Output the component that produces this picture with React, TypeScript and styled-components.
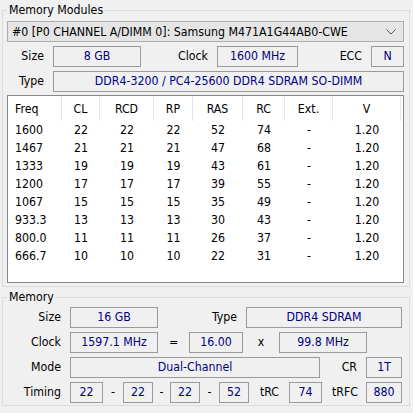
import React from 'react'
import styled, { createGlobalStyle } from 'styled-components'

const GlobalStyle = createGlobalStyle`
  html, body {
    margin: 0;
    padding: 0;
    background: #f0f0f0;
    width: 413px;
    height: 413px;
    overflow: hidden;
  }
  body {
    font-family: "DejaVu Sans Condensed", "DejaVu Sans", sans-serif;
    font-size: 12.25px;
    color: #000;
  }
`

const Page = styled.div`
  width: 408px;
  padding-left: 2px;
`
const Group = styled.div<{ $top: number; $pad: string }>`
  position: relative;
  margin-top: ${(p) => p.$top}px;
  border: 1px solid #dcdcdc;
  padding: ${(p) => p.$pad};
  box-sizing: border-box;
`
const GroupTitle = styled.span`
  position: absolute;
  top: -8px;
  left: 4px;
  padding: 0 2px;
  line-height: 14px;
  background: #f0f0f0;
`
const Stack = styled.div`
  display: flex;
  flex-direction: column;
  gap: 4px;
`
const Row = styled.div`
  display: flex;
  align-items: stretch;
  height: 21px;
`
const Dropdown = styled.div`
  display: flex;
  align-items: center;
  justify-content: space-between;
  height: 21px;
  box-sizing: border-box;
  background: #e5e5e5;
  border: 1px solid #adadad;
  padding: 0 7px 0 4px;
  white-space: nowrap;
`
const Label = styled.div<{ $w: number; $pr?: number }>`
  width: ${(p) => p.$w}px;
  flex: none;
  box-sizing: border-box;
  text-align: right;
  padding-right: ${(p) => p.$pr ?? 9}px;
  padding-top: 3px;
  white-space: nowrap;
`
const Sym = styled.div<{ $w: number }>`
  width: ${(p) => p.$w}px;
  flex: none;
  text-align: center;
  padding-top: 3px;
`
const Field = styled.div<{ $w: number }>`
  width: ${(p) => p.$w}px;
  flex: none;
  box-sizing: border-box;
  border: 1px solid #9a9a9a;
  display: flex;
  align-items: center;
  justify-content: center;
  color: #000080;
  white-space: nowrap;
  padding-bottom: 1px;
`
const SpdTable = styled.div`
  margin-top: -1px;
  height: 188px;
  box-sizing: border-box;
  border: 1px solid #828790;
  background: #fff;
`
const Grid = styled.div`
  display: grid;
  grid-template-columns: 54px 38px 54px 39px 50px 42px 48px 68px;
  grid-template-rows: 25px;
  grid-auto-rows: 18px;
`
const HeadCell = styled.div<{ $left?: boolean }>`
  box-sizing: border-box;
  border-right: 1px solid #e5e5e5;
  display: flex;
  align-items: center;
  justify-content: ${(p) => (p.$left ? 'flex-start' : 'center')};
  padding-left: ${(p) => (p.$left ? 7 : 0)}px;
  padding-top: 1px;
`
const Cell = styled.div<{ $left?: boolean }>`
  display: flex;
  align-items: center;
  justify-content: ${(p) => (p.$left ? 'flex-start' : 'center')};
  padding-left: ${(p) => (p.$left ? 7 : 0)}px;
`

const heads = ['Freq', 'CL', 'RCD', 'RP', 'RAS', 'RC', 'Ext.', 'V']
const rows = [
  ['1600', '22', '22', '22', '52', '74', '-', '1.20'],
  ['1467', '21', '21', '21', '47', '68', '-', '1.20'],
  ['1333', '19', '19', '19', '43', '61', '-', '1.20'],
  ['1200', '17', '17', '17', '39', '55', '-', '1.20'],
  ['1067', '15', '15', '15', '35', '49', '-', '1.20'],
  ['933.3', '13', '13', '13', '30', '43', '-', '1.20'],
  ['800.0', '11', '11', '11', '26', '37', '-', '1.20'],
  ['666.7', '10', '10', '10', '22', '31', '-', '1.20'],
]

const Chevron = () => (
  <svg width="10" height="6" viewBox="0 0 10 6">
    <polyline points="0.5,0.5 5,5 9.5,0.5" fill="none" stroke="#555" strokeWidth="1" />
  </svg>
)

const App: React.FC = () => {
  return (
    <Page>
      <GlobalStyle />
      <Group $top={10} $pad="10px 5px 3px 4px">
        <GroupTitle>Memory Modules</GroupTitle>
        <Stack>
          <Dropdown>
            <span>#0 [P0 CHANNEL A/DIMM 0]: Samsung M471A1G44AB0-CWE</span>
            <Chevron />
          </Dropdown>
          <Row>
            <Label $w={46}>Size</Label>
            <Field $w={88}>8 GB</Field>
            <Label $w={76}>Clock</Label>
            <Field $w={81}>1600 MHz</Field>
            <Label $w={73}>ECC</Label>
            <Field $w={33}>N</Field>
          </Row>
          <Row>
            <Label $w={46}>Type</Label>
            <Field $w={351}>DDR4-3200 / PC4-25600 DDR4 SDRAM SO-DIMM</Field>
          </Row>
          <SpdTable>
            <Grid>
              {heads.map((h, i) => (
                <HeadCell key={h} $left={i === 0}>{h}</HeadCell>
              ))}
              {rows.map((r) =>
                r.map((v, i) => (
                  <Cell key={r[0] + '-' + i} $left={i === 0}>{v}</Cell>
                ))
              )}
            </Grid>
          </SpdTable>
        </Stack>
      </Group>
      <Group $top={10} $pad="9px 5px 2px 4px">
        <GroupTitle>Memory</GroupTitle>
        <Stack>
          <Row>
            <Label $w={63}>Size</Label>
            <Field $w={88}>16 GB</Field>
            <Label $w={88}>Type</Label>
            <Field $w={156}>DDR4 SDRAM</Field>
          </Row>
          <Row>
            <Label $w={63}>Clock</Label>
            <Field $w={88}>1597.1 MHz</Field>
            <Sym $w={31}>=</Sym>
            <Field $w={54}>16.00</Field>
            <Sym $w={36}>x</Sym>
            <Field $w={88}>99.8 MHz</Field>
          </Row>
          <Row>
            <Label $w={63}>Mode</Label>
            <Field $w={250}>Dual-Channel</Field>
            <Label $w={46}>CR</Label>
            <Field $w={36}>1T</Field>
          </Row>
          <Row>
            <Label $w={63}>Timing</Label>
            <Field $w={33}>22</Field>
            <Sym $w={20}>-</Sym>
            <Field $w={30}>22</Field>
            <Sym $w={17}>-</Sym>
            <Field $w={30}>22</Field>
            <Sym $w={19}>-</Sym>
            <Field $w={30}>52</Field>
            <Label $w={40} $pr={10}>tRC</Label>
            <Field $w={33}>74</Field>
            <Label $w={44} $pr={8}>tRFC</Label>
            <Field $w={36}>880</Field>
          </Row>
        </Stack>
      </Group>
    </Page>
  )
}

export default App
